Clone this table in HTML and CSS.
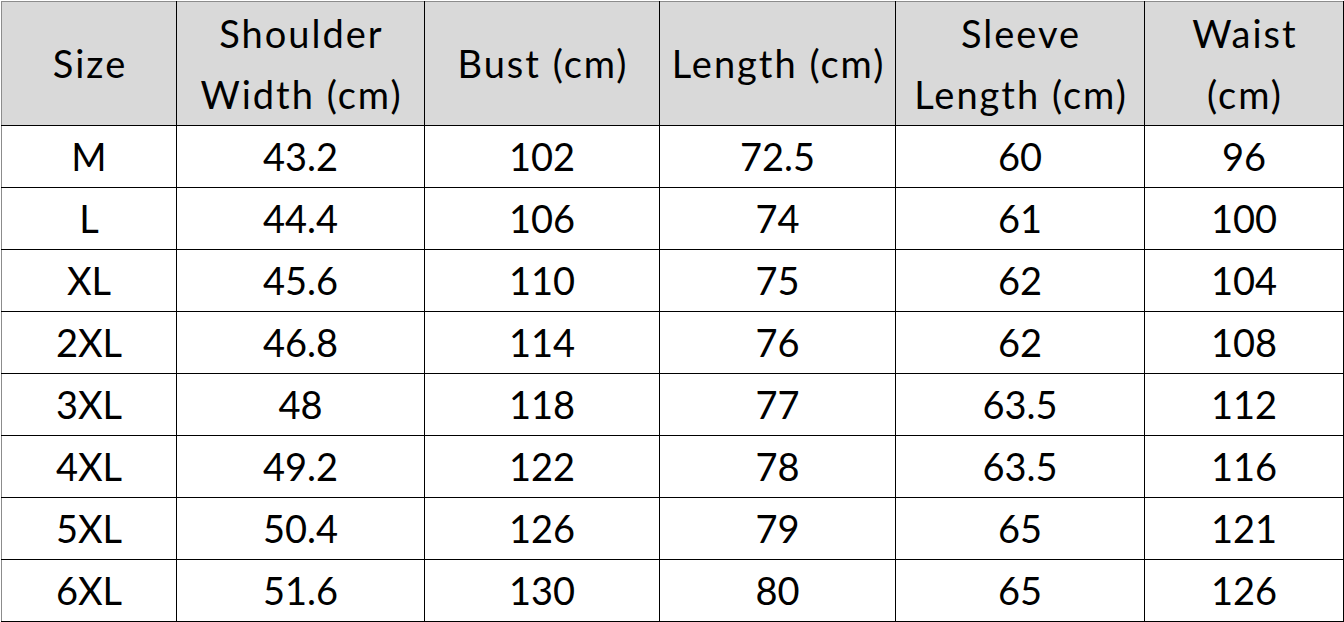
FILE: index.html
```html
<!DOCTYPE html>
<html>
<head>
<meta charset="utf-8">
<link rel="stylesheet" href="styles.css">
</head>
<body>
<div class="wrap">
<table class="chart">
<colgroup>
<col class="c1"><col class="c2"><col class="c3"><col class="c4"><col class="c5"><col class="c6">
</colgroup>
<thead>
<tr><th>Size</th><th>Shoulder<br>Width (cm)</th><th>Bust (cm)</th><th>Length (cm)</th><th>Sleeve<br>Length (cm)</th><th>Waist<br>(cm)</th></tr>
</thead>
<tbody>
<tr><td>M</td><td>43.2</td><td>102</td><td>72.5</td><td>60</td><td>96</td></tr>
<tr><td>L</td><td>44.4</td><td>106</td><td>74</td><td>61</td><td>100</td></tr>
<tr><td>XL</td><td>45.6</td><td>110</td><td>75</td><td>62</td><td>104</td></tr>
<tr><td>2XL</td><td>46.8</td><td>114</td><td>76</td><td>62</td><td>108</td></tr>
<tr><td>3XL</td><td>48</td><td>118</td><td>77</td><td>63.5</td><td>112</td></tr>
<tr><td>4XL</td><td>49.2</td><td>122</td><td>78</td><td>63.5</td><td>116</td></tr>
<tr><td>5XL</td><td>50.4</td><td>126</td><td>79</td><td>65</td><td>121</td></tr>
<tr><td>6XL</td><td>51.6</td><td>130</td><td>80</td><td>65</td><td>126</td></tr>
</tbody>
</table>
</div>
</body>
</html>
```
FILE: styles.css
```css
html, body {
  margin: 0;
  padding: 0;
  background: #ffffff;
}
.wrap {
  padding: 1px 0 0 1px;
}
.chart {
  border-collapse: collapse;
  table-layout: fixed;
  width: 1342px;
  font-family: Lato, "Open Sans", sans-serif;
  font-size: 38px;
  color: #000;
}
.c1 { width: 175px; }
.c2 { width: 248px; }
.c3 { width: 235px; }
.c4 { width: 236px; }
.c5 { width: 249px; }
.c6 { width: 199px; }
.chart th, .chart td {
  border: 1px solid #000;
  padding: 0;
  text-align: center;
  vertical-align: middle;
  font-weight: normal;
  white-space: nowrap;
}
.chart thead th {
  background: #d9d9d9;
  height: 123px;
  line-height: 61px;
  letter-spacing: 2px;
  padding-left: 2px;
  border-top-color: #8c8c8c;
}
.chart td {
  height: 61px;
  line-height: 61px;
}
.chart tr > :first-child {
  border-left-color: #8c8c8c;
}
```
